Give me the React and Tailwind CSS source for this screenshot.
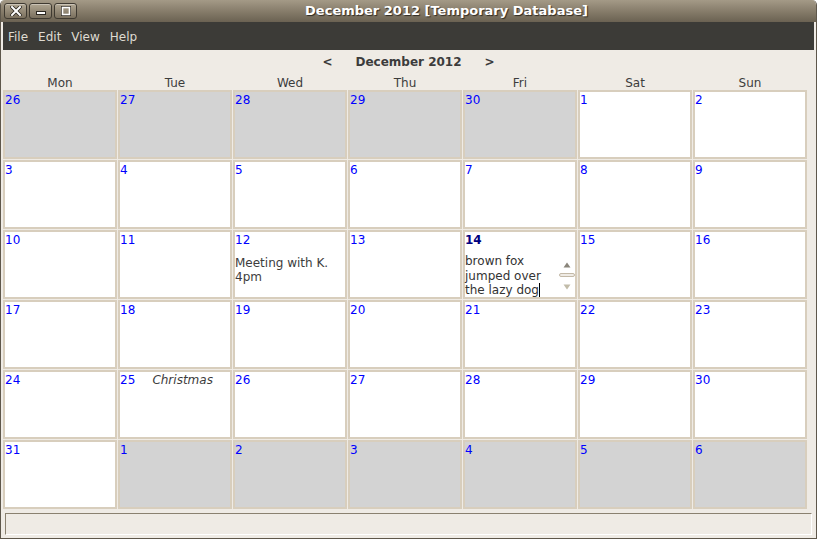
const days = [
  [26, true], [27, true], [28, true], [29, true], [30, true], [1], [2],
  [3], [4], [5], [6], [7], [8], [9],
  [10], [11], [12], [13], [14], [15], [16],
  [17], [18], [19], [20], [21], [22], [23],
  [24], [25], [26], [27], [28], [29], [30],
  [31], [1, true], [2, true], [3, true], [4, true], [5, true], [6, true],
];

const weekdays = ["Mon", "Tue", "Wed", "Thu", "Fri", "Sat", "Sun"];

function TitleButton({ children }) {
  return (
    <div className="w-[23px] h-[16px] rounded-[3px] border border-[#3f3a31] bg-gradient-to-b from-[#b0a692] to-[#7a705e] shadow-[inset_0_1px_0_rgba(255,255,255,0.35)] flex items-center justify-center">
      {children}
    </div>
  );
}

function Cell({ n, other, idx }) {
  const bg = other ? "bg-[#d3d3d3]" : "bg-white";

  if (idx === 18) {
    return (
      <div className={`border-2 border-[#d8cebd] ${bg} flex flex-col`}>
        <div className="pt-px text-[12px] leading-[14px] font-bold text-[#000080]">{n}</div>
        <div className="flex mt-[7px]">
          <div className="flex-1 text-[12px] leading-[14.5px] text-[#333]">
            <div>brown fox</div>
            <div>jumped over</div>
            <div className="flex items-center">
              the lazy dog<span className="inline-block w-px h-[14px] bg-black" />
            </div>
          </div>
          <div className="w-[17px] flex flex-col items-center pt-[8px]">
            <svg width="8" height="6" viewBox="0 0 8 6"><path d="M4 0.5 L7.5 5.5 L0.5 5.5 Z" fill="#8a857b" /></svg>
            <div className="mt-[5px] w-[16px] h-[4px] rounded-full border border-[#c3b9a7] bg-[#efebe5]" />
            <svg className="mt-[7px]" width="8" height="6" viewBox="0 0 8 6"><path d="M0.5 0.5 L7.5 0.5 L4 5.5 Z" fill="#c2bca9" /></svg>
          </div>
        </div>
      </div>
    );
  }

  return (
    <div className={`border-2 border-[#d8cebd] ${bg} flex flex-col`}>
      <div className="flex pt-px text-[12px] leading-[14px]">
        <span className="text-[#0000ff]">{n}</span>
        {idx === 29 && (
          <span className="flex-1 text-center italic text-[#3c3c3c]">Christmas</span>
        )}
      </div>
      {idx === 16 && (
        <div className="mt-[9px] text-[12px] leading-[14px] text-[#3c3c3c]">
          <div>Meeting with K.</div>
          <div>4pm</div>
        </div>
      )}
    </div>
  );
}

export default function App() {
  return (
    <div className="w-[817px] h-[539px] overflow-hidden bg-[#efebe5] font-['DejaVu_Sans',sans-serif] flex flex-col rounded-t-[5px] border-x border-b border-[#5e574b]">
      {/* title bar */}
      <div className="h-[22px] shrink-0 bg-gradient-to-b from-[#a49a87] via-[#877d6b] to-[#6b6252] flex items-center pl-[3px]">
        <div className="flex gap-[2px]">
          <TitleButton>
            <svg width="12" height="10" viewBox="0 0 12 10">
              <path d="M2 1 L10 9 M10 1 L2 9" stroke="#2b2720" strokeWidth="3.6" strokeLinecap="square" />
              <path d="M2 1 L10 9 M10 1 L2 9" stroke="#fff" strokeWidth="2" strokeLinecap="square" />
            </svg>
          </TitleButton>
          <TitleButton>
            <svg width="12" height="10" viewBox="0 0 12 10">
              <rect x="1.5" y="5.5" width="9" height="3" fill="#fff" stroke="#2b2720" strokeWidth="1" />
            </svg>
          </TitleButton>
          <TitleButton>
            <svg width="12" height="10" viewBox="0 0 12 10">
              <rect x="1.5" y="0.5" width="9" height="9" fill="none" stroke="#2b2720" strokeWidth="1" />
              <rect x="2.5" y="1.5" width="7" height="7" fill="none" stroke="#fff" strokeWidth="1.6" />
            </svg>
          </TitleButton>
        </div>
        <div className="flex-1 text-center text-white font-bold text-[13px] [text-shadow:1px_1px_1px_#2f2a22]">
          December 2012 [Temporary Database]
        </div>
      </div>

      {/* menu bar */}
      <div className="h-[28px] shrink-0 mx-[2px] pt-px bg-[#3c3b37] text-[#dfdbd2] text-[12px] flex items-center">
        {["File", "Edit", "View", "Help"].map((m) => (
          <span key={m} className="px-[5px]">{m}</span>
        ))}
      </div>

      {/* month navigation */}
      <div className="h-[22px] shrink-0 pt-[2px] flex items-center justify-center gap-[23px] text-[12px] font-bold text-[#3c3c3c]">
        <span>&lt;</span>
        <span>December 2012</span>
        <span>&gt;</span>
      </div>

      {/* weekdays */}
      <div className="h-[18px] shrink-0 pl-[2px] pt-[4px] grid grid-cols-[repeat(7,114px)] gap-x-px text-[12px] leading-[14px] text-[#3c3c3c]">
        {weekdays.map((d) => (
          <div key={d} className="text-center">{d}</div>
        ))}
      </div>

      {/* month grid */}
      <div className="pl-[2px] grid grid-cols-[repeat(7,114px)] grid-rows-[repeat(6,69px)] gap-px">
        {days.map(([n, other], i) => (
          <Cell key={i} n={n} other={other} idx={i} />
        ))}
      </div>

      {/* status bar */}
      <div className="mt-[4px] ml-[4px] mr-[4px] h-[22px] shrink-0 border-t border-l border-[#8a8170] border-r border-r-white border-b border-b-white" />
    </div>
  );
}
